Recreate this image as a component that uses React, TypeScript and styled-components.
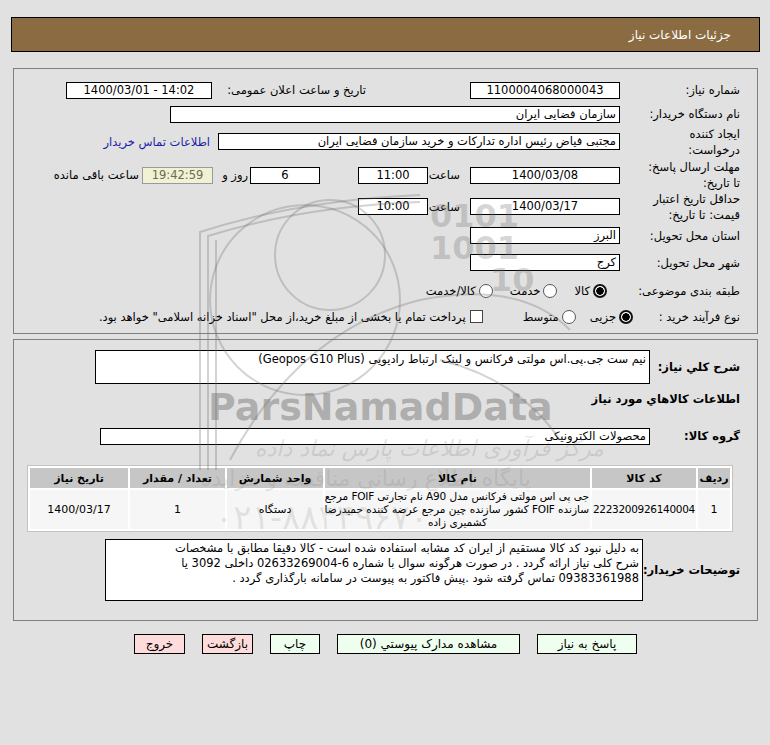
import React from "react";
import styled, { createGlobalStyle } from "styled-components";

const GlobalStyle = createGlobalStyle`
  html, body { margin: 0; padding: 0; background: #e1e1e1; }
  body { font-family: "DejaVu Sans", Tahoma, sans-serif; font-size: 11px; color: #000; }
`;

const Page = styled.div`
  position: relative;
  width: 770px;
  min-height: 745px;
  box-sizing: border-box;
  padding: 17px 10px 0 11px;
  direction: rtl;
  overflow: hidden;
`;

const HeaderBar = styled.div`
  height: 35px;
  box-sizing: border-box;
  border: 1px solid #000;
  background: #8b6c42;
  display: flex;
  align-items: center;
  padding-right: 28px;
`;

const HeaderTitle = styled.span`
  color: #fff;
  font-size: 12px;
`;

const Panel = styled.div<{ $mt: number; $pt: number; $pb: number }>`
  margin: ${(p) => p.$mt}px 2px 0 2px;
  border: 1px solid #7f7f7f;
  padding: ${(p) => p.$pt}px 17px ${(p) => p.$pb}px 0;
`;

const Row = styled.div<{ $h: number }>`
  display: flex;
  align-items: center;
  height: ${(p) => p.$h}px;
`;

const Label = styled.div<{ $w?: number; $bold?: boolean }>`
  flex: none;
  width: ${(p) => p.$w ?? 120}px;
  line-height: 16px;
  font-size: 11.5px;
  font-weight: ${(p) => (p.$bold ? 700 : 400)};
  letter-spacing: ${(p) => (p.$bold ? "-0.5px" : "0")};
  white-space: nowrap;
`;

const Field = styled.div<{ $w: number; $h?: number; $ms?: number; $center?: boolean; $ltr?: boolean; $bg?: string; $fg?: string; $bc?: string }>`
  flex: none;
  box-sizing: border-box;
  width: ${(p) => p.$w}px;
  height: ${(p) => p.$h ?? 17}px;
  margin-right: ${(p) => p.$ms ?? 0}px;
  border: 1px solid ${(p) => p.$bc ?? "#000"};
  background: ${(p) => p.$bg ?? "#fff"};
  color: ${(p) => p.$fg ?? "#000"};
  padding: 0 3px;
  line-height: 15px;
  font-size: 11.5px;
  direction: ${(p) => (p.$ltr ? "ltr" : "rtl")};
  text-align: ${(p) => (p.$center ? "center" : "right")};
  white-space: nowrap;
  overflow: hidden;
`;

const Text = styled.span<{ $w?: number; $ms?: number }>`
  flex: none;
  ${(p) => (p.$w ? `width: ${p.$w}px;` : "")}
  margin-right: ${(p) => p.$ms ?? 0}px;
  font-size: 11.5px;
  white-space: nowrap;
`;

const Link = styled.a`
  flex: none;
  margin-right: 8px;
  color: #2020a8;
  font-size: 11.5px;
  text-decoration: none;
  white-space: nowrap;
`;

const Radio = styled.span<{ $on?: boolean; $ms?: number }>`
  flex: none;
  box-sizing: border-box;
  width: 14px;
  height: 14px;
  margin-right: ${(p) => p.$ms ?? 0}px;
  margin-left: 3px;
  border-radius: 50%;
  border: ${(p) => (p.$on ? "2px solid #111" : "1px solid #555")};
  background: ${(p) => (p.$on ? "radial-gradient(circle, #000 0 3.5px, #fff 4px)" : "#fff")};
`;

const Check = styled.span<{ $ms?: number }>`
  flex: none;
  box-sizing: border-box;
  width: 13px;
  height: 13px;
  margin-right: ${(p) => p.$ms ?? 0}px;
  margin-left: 4px;
  border: 1px solid #444;
  background: #fff;
`;

const TextBox = styled.div<{ $w: number; $h: number }>`
  flex: none;
  box-sizing: border-box;
  width: ${(p) => p.$w}px;
  height: ${(p) => p.$h}px;
  border: 1px solid #000;
  background: #fff;
  padding: 1px 3px;
  font-size: 11.5px;
  line-height: 15px;
  text-align: right;
  white-space: nowrap;
  overflow: hidden;
`;

const SectionTitle = styled.div`
  height: 30px;
  line-height: 30px;
  font-size: 11.5px;
  font-weight: 700;
  letter-spacing: -0.3px;
`;

const Table = styled.table`
  width: 705px;
  margin: 7px 7px 0 0;
  border-collapse: separate;
  border-spacing: 2px;
  border: 1px solid #c2c2c2;
  background: #fff;
  table-layout: fixed;
`;

const Th = styled.th<{ $w: number }>`
  width: ${(p) => p.$w}px;
  height: 20px;
  padding: 0;
  background: #c6c6c6;
  font-size: 11px;
  font-weight: 700;
  letter-spacing: -0.3px;
  text-align: center;
  white-space: nowrap;
  overflow: hidden;
`;

const Td = styled.td<{ $tight?: boolean }>`
  height: 38px;
  padding: 0 1px;
  background: #f6f6f6;
  font-size: ${(p) => (p.$tight ? 10.5 : 11)}px;
  letter-spacing: ${(p) => (p.$tight ? "-0.3px" : "0")};
  line-height: 13px;
  text-align: center;
  white-space: nowrap;
  overflow: hidden;
`;

const NameText = styled.span`
  font-size: 10.5px;
  letter-spacing: -0.2px;
`;

const ButtonBar = styled.div`
  display: flex;
  justify-content: center;
  gap: 17px;
  margin-top: 13px;
`;

const Button = styled.button<{ $w: number; $danger?: boolean }>`
  width: ${(p) => p.$w}px;
  height: 20px;
  box-sizing: border-box;
  border: 1px solid #000;
  background: ${(p) => (p.$danger ? "#ffdcdc" : "#efffef")};
  font-family: "DejaVu Sans", Tahoma, sans-serif;
  font-size: 12px;
  padding: 0;
  color: #000;
`;

const Watermark = styled.div`
  position: absolute;
  inset: 0;
  pointer-events: none;
  z-index: 5;
`;

const WmText = styled.div<{ $x: number; $y: number; $size: number; $a: number; $bold?: boolean; $italic?: boolean }>`
  position: absolute;
  left: ${(p) => p.$x}px;
  top: ${(p) => p.$y}px;
  font-size: ${(p) => p.$size}px;
  line-height: 1;
  font-weight: ${(p) => (p.$bold ? 700 : 400)};
  font-style: ${(p) => (p.$italic ? "italic" : "normal")};
  color: rgba(110, 110, 110, ${(p) => p.$a});
  white-space: nowrap;
  direction: ltr;
`;

const WmSvg = styled.svg`
  position: absolute;
  left: 0;
  top: 0;
`;

export default function App() {
  return (
    <>
      <GlobalStyle />
      <Page>
        <HeaderBar>
          <HeaderTitle>جزئیات اطلاعات نیاز</HeaderTitle>
        </HeaderBar>

        <Panel $mt={16} $pt={9} $pb={7}>
          <Row $h={24}>
            <Label>شماره نیاز:</Label>
            <Field $w={150} $center>1100004068000043</Field>
            <Text $w={150} $ms={104}>تاریخ و ساعت اعلان عمومی:</Text>
            <Field $w={146} $ms={4} $center $ltr>1400/03/01 - 14:02</Field>
          </Row>
          <Row $h={24}>
            <Label>نام دستگاه خریدار:</Label>
            <Field $w={450}>سازمان فضایی ایران</Field>
          </Row>
          <Row $h={31}>
            <Label>ایجاد کننده<br />درخواست:</Label>
            <Field $w={402}>مجتبی  فیاض رئیس اداره تدارکات و خرید سازمان فضایی ایران</Field>
            <Link href="#">اطلاعات تماس خریدار</Link>
          </Row>
          <Row $h={36}>
            <Label>مهلت ارسال پاسخ:<br />تا تاریخ:</Label>
            <Field $w={150} $center>1400/03/08</Field>
            <Text $w={32} $ms={10}>ساعت</Text>
            <Field $w={70} $center>11:00</Field>
            <Field $w={70} $ms={38} $center>6</Field>
            <Text $w={35} $ms={2}>روز و</Text>
            <Field $w={71} $center $bg="#f1f1d3" $fg="#6b6b55" $bc="#9a9a9a">19:42:59</Field>
            <Text $ms={3}>ساعت باقی مانده</Text>
          </Row>
          <Row $h={27}>
            <Label>حداقل تاریخ اعتبار<br />قیمت: تا تاریخ:</Label>
            <Field $w={150} $center>1400/03/17</Field>
            <Text $w={32} $ms={10}>ساعت</Text>
            <Field $w={70} $center>10:00</Field>
          </Row>
          <Row $h={31}>
            <Label>استان محل تحویل:</Label>
            <Field $w={150}>البرز</Field>
          </Row>
          <Row $h={23}>
            <Label>شهر محل تحویل:</Label>
            <Field $w={150}>کرج</Field>
          </Row>
          <Row $h={33}>
            <Label>طبقه بندی موضوعی:</Label>
            <Radio $on $ms={13} />
            <Text>کالا</Text>
            <Radio $ms={17} />
            <Text>خدمت</Text>
            <Radio $ms={17} />
            <Text>کالا/خدمت</Text>
          </Row>
          <Row $h={19}>
            <Label $w={107}>نوع فرآیند خرید :</Label>
            <Radio $on />
            <Text>جزیی</Text>
            <Radio $ms={14} />
            <Text>متوسط</Text>
            <Check $ms={40} />
            <Text>پرداخت تمام یا بخشی از مبلغ خرید،از محل "اسناد خزانه اسلامی" خواهد بود.</Text>
          </Row>
        </Panel>

        <Panel $mt={5} $pt={10} $pb={13}>
          <Row $h={34}>
            <Label $w={90} $bold>شرح کلي نياز:</Label>
            <TextBox $w={555} $h={34}>نیم ست جی.پی.اس مولتی فرکانس و لینک ارتباط رادیویی (Geopos G10 Plus)</TextBox>
          </Row>
          <SectionTitle>اطلاعات کالاهاي مورد نياز</SectionTitle>
          <Row $h={44}>
            <Label $w={90} $bold>گروه کالا:</Label>
            <Field $w={550}>محصولات الکترونیکی</Field>
          </Row>
          <Table>
            <thead>
              <tr>
                <Th $w={32}>ردیف</Th>
                <Th $w={104}>کد کالا</Th>
                <Th $w={265}>نام کالا</Th>
                <Th $w={96}>واحد شمارش</Th>
                <Th $w={95}>تعداد / مقدار</Th>
                <Th $w={98}>تاریخ نیاز</Th>
              </tr>
            </thead>
            <tbody>
              <tr>
                <Td>1</Td>
                <Td $tight>2223200926140004</Td>
                <Td>
                  <NameText>
                    جی پی اس مولتی فرکانس مدل A90 نام تجارتی FOIF مرجع
                    <br />
                    سازنده FOIF کشور سازنده چین مرجع عرضه کننده حمیدرضا
                    <br />
                    کشمیری زاده
                  </NameText>
                </Td>
                <Td>دستگاه</Td>
                <Td>1</Td>
                <Td>1400/03/17</Td>
              </tr>
            </tbody>
          </Table>
          <Row $h={75}>
            <Label $w={97} $bold>توضیحات خریدار:</Label>
            <TextBox $w={538} $h={62}>
              به دلیل نبود کد کالا مستقیم از ایران کد مشابه استفاده شده است - کالا دقیقا مطابق با مشخصات
              <br />
              شرح کلی نیاز ارائه گردد . در صورت هرگونه سوال با شماره 6-02633269004 داخلی 3092 یا
              <br />
              09383361988 تماس گرفته شود .پیش فاکتور به پیوست در سامانه بارگذاری گردد .
            </TextBox>
          </Row>
        </Panel>

        <ButtonBar>
          <Button $w={100}>پاسخ به نیاز</Button>
          <Button $w={183}>مشاهده مدارک پیوستي (0)</Button>
          <Button $w={50}>چاپ</Button>
          <Button $w={51} $danger>بازگشت</Button>
          <Button $w={51} $danger>خروج</Button>
        </ButtonBar>

        <Watermark>
          <WmSvg width="770" height="745" viewBox="0 0 770 745">
            <g fill="none" stroke="rgba(110,110,110,0.3)" strokeWidth="2">
              <path d="M200 470 L200 232 Q300 200 420 195" />
              <path d="M208 470 L208 236 Q305 206 420 202" />
              <path d="M216 470 L216 240" />
              <circle cx="305" cy="300" r="95" />
              <circle cx="330" cy="255" r="55" />
              <path d="M230 460 Q300 330 420 300 Q520 280 570 330" />
              <path d="M440 360 Q520 380 560 440" />
            </g>
          </WmSvg>
          <WmText $x={430} $y={200} $size={32} $a={0.28} $bold>0101</WmText>
          <WmText $x={430} $y={232} $size={32} $a={0.28} $bold>1001</WmText>
          <WmText $x={490} $y={264} $size={32} $a={0.28} $bold>10</WmText>
          <WmText $x={208} $y={388} $size={38} $a={0.45} $bold>ParsNamadData</WmText>
          <WmText $x={255} $y={438} $size={22} $a={0.2} $italic>مرکز فرآوری اطلاعات پارس نماد داده</WmText>
          <WmText $x={200} $y={468} $size={22} $a={0.17}>پایگاه اطلاع رسانی مناقصه و مزایده</WmText>
          <WmText $x={215} $y={500} $size={34} $a={0.17}>۰۲۱-۸۸۳۴۹۶۷۰</WmText>
        </Watermark>
      </Page>
    </>
  );
}
